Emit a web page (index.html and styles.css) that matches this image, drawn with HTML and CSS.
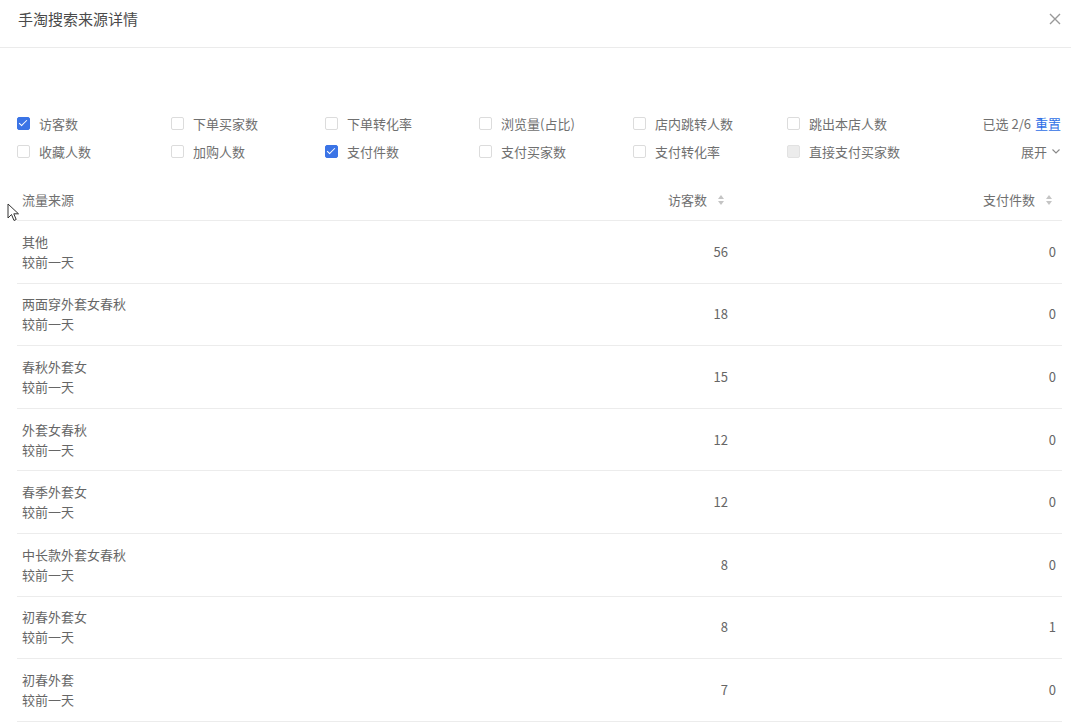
FILE: index.html
```html
<!DOCTYPE html>
<html lang="zh-CN">
<head>
  <meta charset="UTF-8">
  <title>手淘搜索来源详情</title>
  <link rel="stylesheet" href="styles.css">
</head>
<body>
  <div class="dialog">
    <!-- Header -->
    <div class="dialog-header">
      <span class="dialog-title">手淘搜索来源详情</span>
      <svg class="close" width="12" height="12" viewBox="0 0 12 12"><path d="M1 1L11 11M11 1L1 11" stroke="#999" stroke-width="1.4" fill="none"/></svg>
    </div>

    <!-- Metric filter -->
    <div class="filter">
      <div class="filter-row">
        <label class="check"><span class="box checked"></span>访客数</label>
        <label class="check"><span class="box"></span>下单买家数</label>
        <label class="check"><span class="box"></span>下单转化率</label>
        <label class="check"><span class="box"></span>浏览量(占比)</label>
        <label class="check"><span class="box"></span>店内跳转人数</label>
        <label class="check"><span class="box"></span>跳出本店人数</label>
        <div class="filter-side">已选 2/6 <a class="link">重置</a></div>
      </div>
      <div class="filter-row">
        <label class="check"><span class="box"></span>收藏人数</label>
        <label class="check"><span class="box"></span>加购人数</label>
        <label class="check"><span class="box checked"></span>支付件数</label>
        <label class="check"><span class="box"></span>支付买家数</label>
        <label class="check"><span class="box"></span>支付转化率</label>
        <label class="check"><span class="box disabled"></span>直接支付买家数</label>
        <div class="filter-side">展开 <svg width="10" height="10" viewBox="0 0 10 10"><path d="M1.5 3.5L5 7L8.5 3.5" stroke="#888" stroke-width="1.1" fill="none"/></svg></div>
      </div>
    </div>

    <!-- Source table -->
    <table class="source-table">
      <colgroup>
        <col class="col-name">
        <col class="col-num">
        <col class="col-num">
      </colgroup>
      <thead>
        <tr>
          <th class="left">流量来源</th>
          <th class="right">访客数<span class="sorter"><i class="up"></i><i class="down"></i></span></th>
          <th class="right">支付件数<span class="sorter"><i class="up"></i><i class="down"></i></span></th>
        </tr>
      </thead>
      <tbody>
        <tr><td><div>其他</div><div>较前一天</div></td><td class="right">56</td><td class="right">0</td></tr>
        <tr><td><div>两面穿外套女春秋</div><div>较前一天</div></td><td class="right">18</td><td class="right">0</td></tr>
        <tr><td><div>春秋外套女</div><div>较前一天</div></td><td class="right">15</td><td class="right">0</td></tr>
        <tr><td><div>外套女春秋</div><div>较前一天</div></td><td class="right">12</td><td class="right">0</td></tr>
        <tr><td><div>春季外套女</div><div>较前一天</div></td><td class="right">12</td><td class="right">0</td></tr>
        <tr><td><div>中长款外套女春秋</div><div>较前一天</div></td><td class="right">8</td><td class="right">0</td></tr>
        <tr><td><div>初春外套女</div><div>较前一天</div></td><td class="right">8</td><td class="right">1</td></tr>
        <tr><td><div>初春外套</div><div>较前一天</div></td><td class="right">7</td><td class="right">0</td></tr>
      </tbody>
    </table>
  </div>

  <!-- mouse pointer from the capture -->
  <svg class="cursor" width="14" height="20" viewBox="0 0 14 20"><path d="M1 1L1 15L4.5 11.5L7 17.5L9.2 16.5L6.8 10.8L11.5 10.8Z" fill="#fff" stroke="#333" stroke-width="1"/></svg>
</body>
</html>
```

FILE: styles.css
```css
body {
  margin: 0;
  background: #fff;
  font-family: "Noto Sans CJK SC", "Noto Sans", sans-serif;
  color: #666;
}
.dialog {
  width: 1071px;
  height: 724px;
  overflow: hidden;
}
.dialog-header {
  height: 38px;
  padding: 9px 10px 0 18px;
  display: flex;
  justify-content: space-between;
  border-bottom: 1px solid #ebebeb;
}
.dialog-title {
  font-size: 15px;
  line-height: 20px;
  color: #4a4a4a;
}
.close {
  margin-top: 4px;
}

/* filter block */
.filter {
  margin-top: 61px;
  padding: 0 10px 0 17px;
}
.filter-row {
  display: flex;
  align-items: center;
  height: 28px;
}
.check {
  width: 154px;
  display: flex;
  align-items: center;
  font-size: 13px;
  color: #707070;
}
.box {
  width: 11px;
  height: 11px;
  border: 1px solid #dcdcdc;
  border-radius: 2px;
  margin-right: 9px;
  background: #fff;
  position: relative;
}
.box.checked {
  background: #3b74e6;
  border-color: #3b74e6;
}
.box.checked::after {
  content: "";
  position: absolute;
  left: 3px;
  top: 0px;
  width: 3px;
  height: 7px;
  border: solid #fff;
  border-width: 0 1.6px 1.6px 0;
  transform: rotate(45deg);
}
.box.disabled {
  background: #ececec;
  border-color: #e2e2e2;
}
.filter-side {
  margin-left: auto;
  font-size: 13px;
  color: #707070;
  display: flex;
  align-items: center;
  gap: 4px;
}
.link {
  color: #2f6fe6;
}

/* table */
.source-table {
  margin: 14px 0 0 17px;
  width: 1045px;
  border-collapse: collapse;
  table-layout: fixed;
  font-size: 13px;
}
.col-name {
  width: 389px;
}
.col-num {
  width: 328px;
}
.source-table th {
  height: 41px;
  font-weight: normal;
  color: #707070;
  padding: 0 6px 0 5px;
  border-bottom: 1px solid #ececec;
}
.source-table td {
  height: 61.6px;
  padding: 0 6px 0 5px;
  border-bottom: 1px solid #ececec;
  line-height: 20px;
  color: #666;
}
.left {
  text-align: left;
}
.right {
  text-align: right;
}
.sorter {
  display: inline-flex;
  flex-direction: column;
  gap: 2px;
  margin: 0 4px 0 11px;
  vertical-align: middle;
  position: relative;
  top: -1px;
}
.sorter i {
  width: 0;
  height: 0;
  border-left: 3.5px solid transparent;
  border-right: 3.5px solid transparent;
}
.sorter .up {
  border-bottom: 4px solid #c4c4c4;
}
.sorter .down {
  border-top: 4px solid #c4c4c4;
}

.cursor {
  position: absolute;
  left: 7px;
  top: 203px;
}
```
